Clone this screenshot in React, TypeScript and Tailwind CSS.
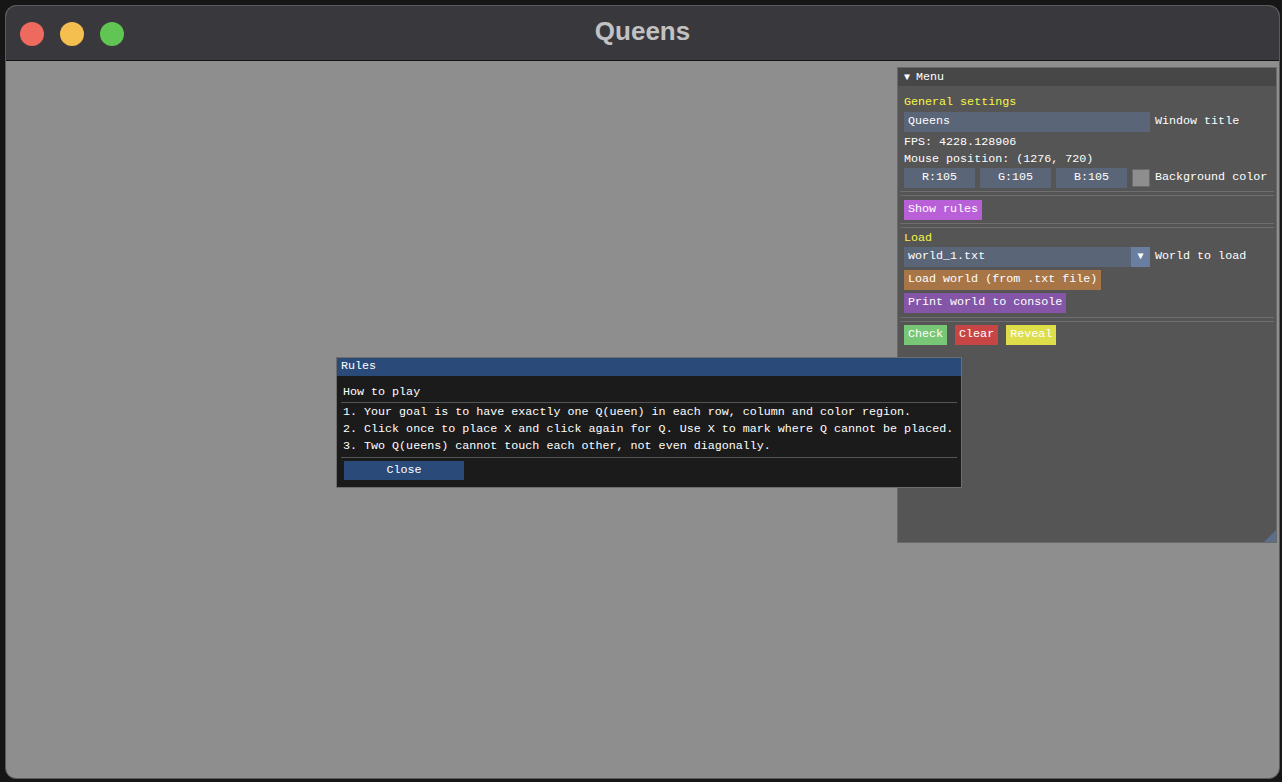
import React from 'react';

const mono = { fontFamily: '"Liberation Mono", "DejaVu Sans Mono", monospace' };

function Sep({ className = '' }: { className?: string }) {
  return (
    <div className={`flex flex-col gap-[3px] py-[3px] -mx-[4px] ${className}`}>
      <div className="h-px bg-[#6e6e6e]" />
      <div className="h-px bg-[#6e6e6e]" />
    </div>
  );
}

function Field({ children, className = '' }: { children: React.ReactNode; className?: string }) {
  return (
    <div className={`h-[20px] bg-[#5a6577] flex items-center text-white ${className}`}>{children}</div>
  );
}

function MenuPanel() {
  return (
    <div
      className="absolute left-[891px] top-[6px] w-[380px] h-[476px] bg-[#555555] border border-[#6a6a6a] text-white text-[11.7px] leading-none"
      style={mono}
    >
      <div className="h-[18px] bg-[#474747] flex items-center pl-[6px] gap-[6px] pt-[1px]">
        <span className="text-[10px]">▼</span>
        <span>Menu</span>
      </div>
      <div className="px-[6px] pt-[9px] flex flex-col">
        <div className="text-[#f5f545] h-[15px] flex items-center">General settings</div>
        <div className="flex items-center gap-[5px] mt-[2px]">
          <Field className="w-[246px] pl-[4px]">Queens</Field>
          <span>Window title</span>
        </div>
        <div className="h-[17px] flex items-center mt-[2px]">FPS: 4228.128906</div>
        <div className="h-[17px] flex items-center">Mouse position: (1276, 720)</div>
        <div className="flex items-center gap-[5px]">
          <Field className="w-[71px] justify-center">R:105</Field>
          <Field className="w-[71px] justify-center">G:105</Field>
          <Field className="w-[71px] justify-center">B:105</Field>
          <div className="w-[18px] h-[18px] bg-[#8e8e8e] border border-[#6a6a6a]" />
          <span>Background color</span>
        </div>
        <Sep />
        <div className="flex mt-[1px]">
          <div className="h-[20px] px-[4px] bg-[#b960d8] flex items-center">Show rules</div>
        </div>
        <Sep />
        <div className="text-[#f5f545] h-[15px] flex items-center">Load</div>
        <div className="flex items-center gap-[5px] mt-[1px]">
          <div className="w-[246px] h-[20px] bg-[#5a6577] flex items-center">
            <span className="flex-1 pl-[4px]">world_1.txt</span>
            <div className="w-[19px] h-[20px] bg-[#6a7fa0] flex items-center justify-center text-[10px]">▼</div>
          </div>
          <span>World to load</span>
        </div>
        <div className="flex mt-[3px]">
          <div className="h-[20px] px-[4px] bg-[#a87646] flex items-center">Load world (from .txt file)</div>
        </div>
        <div className="flex mt-[3px]">
          <div className="h-[20px] px-[4px] bg-[#8556a8] flex items-center">Print world to console</div>
        </div>
        <Sep className="mt-[1px]" />
        <div className="flex gap-[8px]">
          <div className="h-[20px] px-[4px] bg-[#77c776] flex items-center">Check</div>
          <div className="h-[20px] px-[4px] bg-[#c84545] flex items-center">Clear</div>
          <div className="h-[20px] px-[4px] bg-[#dede4b] flex items-center">Reveal</div>
        </div>
      </div>
      <svg className="absolute right-0 bottom-0" width="12" height="12" viewBox="0 0 12 12">
        <polygon points="12,0 12,12 0,12" fill="#5b6e8a" />
      </svg>
    </div>
  );
}

function RulesWindow() {
  return (
    <div
      className="absolute left-[330px] top-[296px] w-[626px] h-[131px] bg-[#1b1b1b] border border-[#6e6e6e] text-white text-[11.7px] leading-none"
      style={mono}
    >
      <div className="h-[18px] bg-[#2a4a7a] flex items-center pl-[4px]">Rules</div>
      <div className="px-[6px] flex flex-col">
        <div className="h-[15px] flex items-center mt-[9px]">How to play</div>
        <div className="h-px bg-[#555] mt-[2px] -mx-[2px]" />
        <div className="h-[17px] flex items-center mt-[1px]">1. Your goal is to have exactly one Q(ueen) in each row, column and color region.</div>
        <div className="h-[17px] flex items-center">2. Click once to place X and click again for Q. Use X to mark where Q cannot be placed.</div>
        <div className="h-[17px] flex items-center">3. Two Q(ueens) cannot touch each other, not even diagonally.</div>
        <div className="h-px bg-[#555] mt-[2px] -mx-[2px]" />
        <div className="flex mt-[3px] ml-[1px]">
          <div className="w-[120px] h-[19px] bg-[#2a4a7a] flex items-center justify-center">Close</div>
        </div>
      </div>
    </div>
  );
}

export default function App() {
  return (
    <div className="w-[1282px] h-[782px] bg-[#161616] pt-[5px] pl-[5px] overflow-hidden">
      <div className="w-[1275px] h-[774px] rounded-[11px] overflow-hidden bg-[#8e8e8e] border border-[#5a5a5a] flex flex-col">
        <div className="h-[55px] bg-[#38383d] border-b border-[#111] flex items-center relative shrink-0">
          <div className="flex gap-[16px] pl-[14px] pt-[1px]">
            <div className="w-[24px] h-[24px] rounded-full bg-[#ee6a5f]" />
            <div className="w-[24px] h-[24px] rounded-full bg-[#f5bf4f]" />
            <div className="w-[24px] h-[24px] rounded-full bg-[#61c554]" />
          </div>
          <div
            className="absolute inset-0 flex items-center justify-center pb-[4px] text-[26px] font-bold text-[#c2c2c4]"
            style={{ fontFamily: '"Liberation Sans", Arial, sans-serif' }}
          >
            Queens
          </div>
        </div>
        <div className="flex-1 relative">
          <MenuPanel />
          <RulesWindow />
        </div>
      </div>
    </div>
  );
}
